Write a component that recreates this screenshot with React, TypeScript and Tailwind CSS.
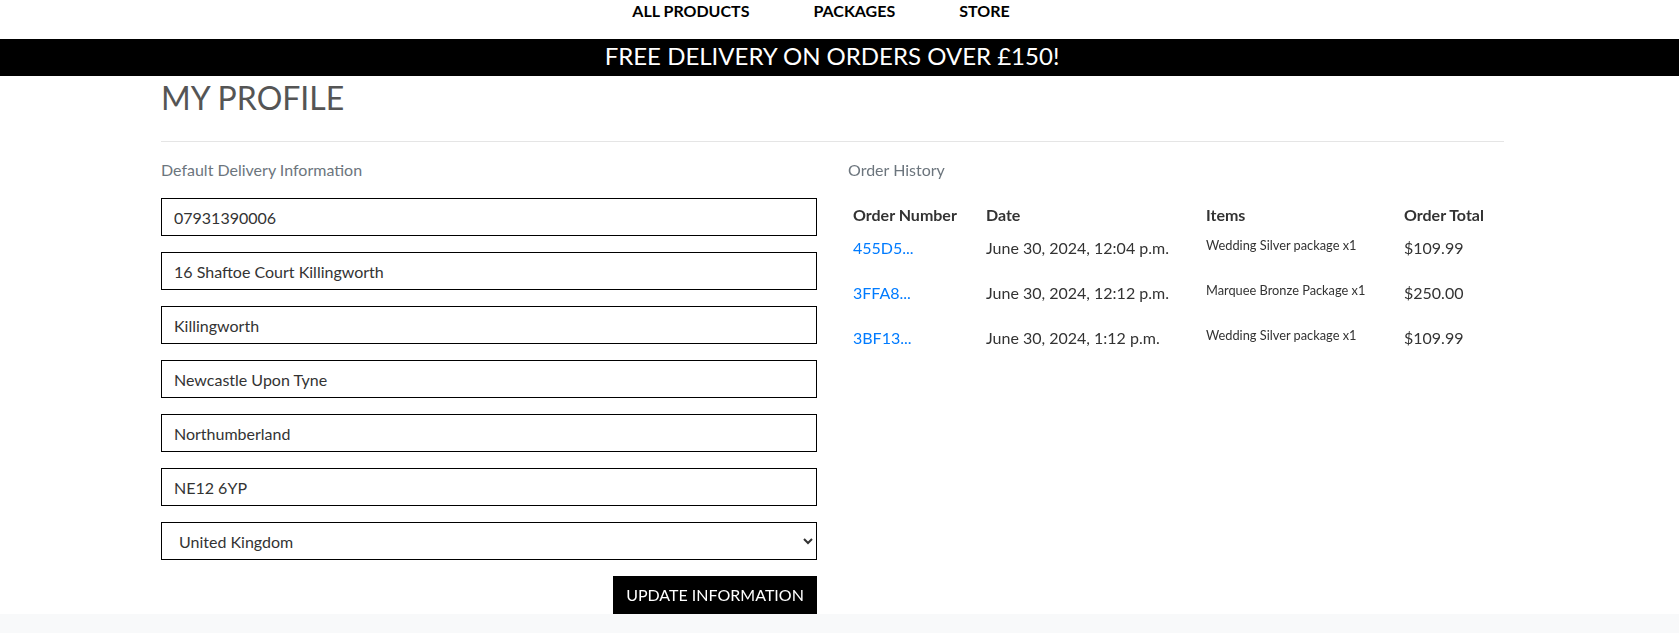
import React from "react";

const fields = [
  "07931390006",
  "16 Shaftoe Court Killingworth",
  "Killingworth",
  "Newcastle Upon Tyne",
  "Northumberland",
  "NE12 6YP",
];

const orders = [
  { id: "455D5...", date: "June 30, 2024, 12:04 p.m.", items: "Wedding Silver package x1", total: "$109.99" },
  { id: "3FFA8...", date: "June 30, 2024, 12:12 p.m.", items: "Marquee Bronze Package x1", total: "$250.00" },
  { id: "3BF13...", date: "June 30, 2024, 1:12 p.m.", items: "Wedding Silver package x1", total: "$109.99" },
];

export default function App() {
  return (
    <div className="min-h-screen flex flex-col bg-white font-['Lato',sans-serif] text-[#333]">
      {/* Top nav */}
      <nav className="h-[39px] flex justify-center items-start pr-[37px]">
        {["ALL PRODUCTS", "PACKAGES", "STORE"].map((item) => (
          <a key={item} href="#" className="px-8 text-[16px] leading-[22px] font-bold text-black">
            {item}
          </a>
        ))}
      </nav>

      {/* Delivery banner */}
      <div className="h-[37px] bg-black text-white text-center pr-[15px]">
        <p className="text-[24px] leading-[34px]">FREE DELIVERY ON ORDERS OVER £150!</p>
      </div>

      {/* Profile */}
      <main className="pr-[14px]">
        <div className="w-[1343px] mx-auto">
          <h2 className="mt-[3px] text-[32px] leading-[38px] text-[#555]">MY PROFILE</h2>
          <hr className="mt-6 border-0 border-t border-[#e5e5e5]" />

          <div className="flex gap-[31px]">
            {/* Delivery form */}
            <div className="w-[656px]">
              <p className="mt-4 mb-4 text-[16px] leading-6 text-[#6c757d]">Default Delivery Information</p>
              <form className="flex flex-col">
                {fields.map((value, i) => (
                  <input
                    key={value}
                    autoFocus={i === 0}
                    defaultValue={value}
                    className="h-[38px] mb-4 px-3 border border-black bg-white text-[16px] text-[#333] outline-none"
                  />
                ))}
                <select
                  defaultValue="GB"
                  className="h-[38px] pl-[13px] pr-2 border border-black bg-white text-[16px] text-[#333] outline-none"
                >
                  <option value="GB">United Kingdom</option>
                </select>
                <div className="flex justify-end mt-4">
                  <button
                    type="button"
                    className="h-[38px] w-[204px] bg-black text-white text-[16px] leading-6 uppercase"
                  >
                    Update Information
                  </button>
                </div>
              </form>
            </div>

            {/* Order history */}
            <div className="w-[656px]">
              <p className="mt-4 mb-4 text-[16px] leading-6 text-[#6c757d]">Order History</p>
              <table className="w-full table-fixed text-left">
                <thead>
                  <tr>
                    <th className="w-[133px] px-[5px] py-[4.8px] text-[16px] leading-6 font-bold align-top">Order Number</th>
                    <th className="w-[220px] px-[5px] py-[4.8px] text-[16px] leading-6 font-bold align-top">Date</th>
                    <th className="w-[198px] px-[5px] py-[4.8px] text-[16px] leading-6 font-bold align-top">Items</th>
                    <th className="px-[5px] py-[4.8px] text-[16px] leading-6 font-bold align-top">Order Total</th>
                  </tr>
                </thead>
                <tbody>
                  {orders.map((o) => (
                    <tr key={o.id}>
                      <td className="px-[5px] py-[4.8px] align-top text-[16px] leading-6">
                        <a href="#" className="text-[#007bff]">{o.id}</a>
                      </td>
                      <td className="px-[5px] py-[4.8px] align-top text-[16px] leading-6">{o.date}</td>
                      <td className="px-[5px] py-[4.8px] align-top">
                        <p className="mb-4 text-[12.8px] leading-[19.2px]">{o.items}</p>
                      </td>
                      <td className="px-[5px] py-[4.8px] align-top text-[16px] leading-6">{o.total}</td>
                    </tr>
                  ))}
                </tbody>
              </table>
            </div>
          </div>
        </div>
      </main>

      <footer className="flex-1 bg-[#f8f9fa]" />
    </div>
  );
}
